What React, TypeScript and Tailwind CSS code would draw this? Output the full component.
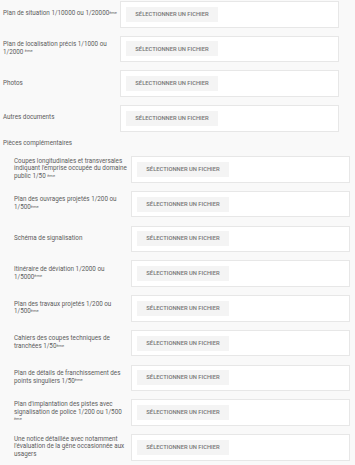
const mainRows = [
  { label: "Plan de situation 1/10000 ou 1/20000", sup: "ème" },
  { label: "Plan de localisation précis 1/1000 ou 1/2000 ", sup: "ème" },
  { label: "Photos" },
  { label: "Autres documents" },
];

const extraRows = [
  { label: "Coupes longitudinales et transversales indiquant l'emprise occupée du domaine public 1/50 ", sup: "ème" },
  { label: "Plan des ouvrages projetés 1/200 ou 1/500", sup: "ème" },
  { label: "Schéma de signalisation" },
  { label: "Itinéraire de déviation 1/2000 ou 1/5000", sup: "ème" },
  { label: "Plan des travaux projetés 1/200 ou 1/500", sup: "ème" },
  { label: "Cahiers des coupes techniques de tranchées 1/50", sup: "ème" },
  { label: "Plan de détails de franchissement des points singuliers 1/50", sup: "ème" },
  { label: "Plan d'implantation des pistes avec signalisation de police 1/200 ou 1/500 ", sup: "ème" },
  { label: "Une notice détaillée avec notamment l'évaluation de la gêne occasionnée aux usagers" },
];

function FileRow({ label, sup }: { label: string; sup?: string }) {
  return (
    <div className="flex items-center">
      <div className="w-[117px] shrink-0 pr-[3px] text-[6.3px] leading-[7.8px] text-[#5c5c5c]">
        {label}
        {sup && <span className="relative -top-[1.5px] text-[4px] leading-[4px]">{sup}</span>}
      </div>
      <div className="w-[219px] h-[26.5px] shrink-0 bg-white border border-[#e7e7e7] flex items-center pl-[5px]">
        <button className="h-[15px] w-[92px] bg-[#f4f4f4] text-[5.8px] font-medium text-[#747474] whitespace-nowrap">
          SÉLECTIONNER UN FICHIER
        </button>
      </div>
    </div>
  );
}

export default function App() {
  return (
    <div className="min-h-screen bg-[#f9f9f9] pt-[1px] pl-[3px] font-['Roboto',sans-serif]">
      <div className="flex flex-col gap-[8.2px]">
        {mainRows.map((r) => (
          <FileRow key={r.label} {...r} />
        ))}
      </div>

      <div className="mt-[7.8px] mb-[8.7px] text-[6.3px] leading-[8px] text-[#5c5c5c]">
        Pièces complémentaires
      </div>

      <div className="ml-[11px] flex flex-col gap-[8.25px]">
        {extraRows.map((r) => (
          <FileRow key={r.label} {...r} />
        ))}
      </div>
    </div>
  );
}
